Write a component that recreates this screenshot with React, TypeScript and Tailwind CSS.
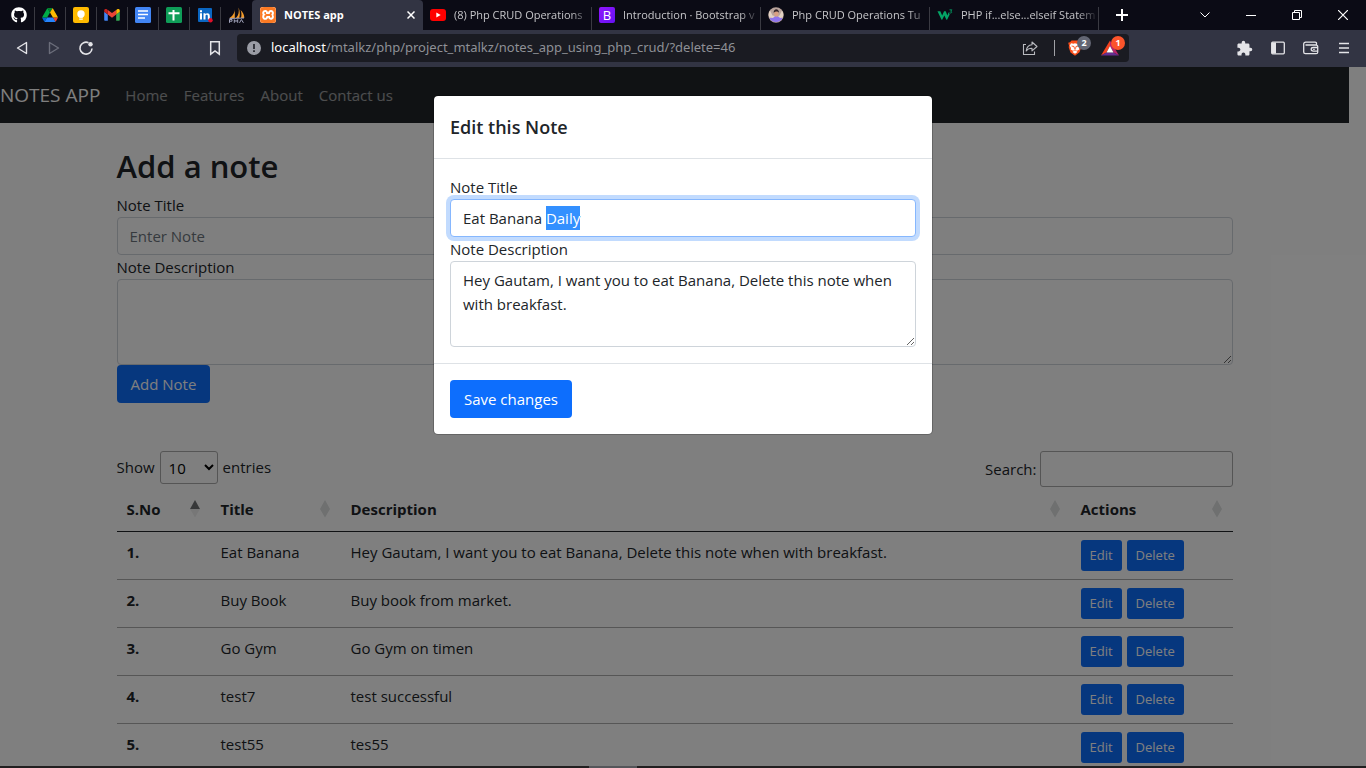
import { useEffect, useRef, type ReactNode } from 'react';
import { FaGithub } from 'react-icons/fa';
import { MdExtension } from 'react-icons/md';
import { SiXampp } from 'react-icons/si';

const DriveIcon = () => (
  <svg viewBox="0 0 87 78" className="h-3.5 w-4" aria-hidden="true">
    <path d="M6.6 66.9l3.8 6.6c.8 1.4 2 2.5 3.3 3.3l13.7-23.8H0c0 1.5.4 3.1 1.2 4.5z" fill="#0066da" />
    <path d="M43.6 25L29.9 1.2c-1.3.8-2.5 1.9-3.3 3.3L1.2 48.5A9 9 0 0 0 0 53h27.5z" fill="#00ac47" />
    <path d="M73.5 76.8c1.4-.8 2.6-1.9 3.4-3.3l9.2-16c.8-1.4 1.2-3 1.2-4.5H59.8l5.8 11.5z" fill="#ea4335" />
    <path d="M43.6 25L57.4 1.2C56 .4 54.500 0 52.900 0H34.400c-1.600 0-3.200.4-4.500 1.200z" fill="#00832d" />
    <path d="M59.800 53H27.500L13.700 76.800c1.400.8 2.900 1.200 4.500 1.200h50.800c1.600 0 3.200-.5 4.500-1.200z" fill="#2684fc" />
    <path d="M73.400 26.500L60.700 4.500c-.8-1.400-2-2.500-3.300-3.300L43.600 25l16.200 28h27.400c0-1.500-.4-3.100-1.200-4.500z" fill="#ffba00" />
  </svg>
);

const KeepIcon = () => (
  <svg viewBox="0 0 16 16" className="size-4" aria-hidden="true">
    <rect width="16" height="16" rx="2" fill="#ffba00" />
    <circle cx="8" cy="7" r="3.700" fill="#fff" />
    <path d="M6.200 9h3.600v1.700H6.200zM6.200 11.600h3.600v1.200H6.200z" fill="#fff" />
  </svg>
);

const GmailIcon = () => (
  <svg viewBox="0 0 52 40" className="h-3 w-4" aria-hidden="true">
    <path d="M3.500 39H12V18.500L0 9.500v26C0 37.400 1.600 39 3.500 39z" fill="#4285f4" />
    <path d="M40 39h8.500c1.900 0 3.500-1.600 3.500-3.500v-26l-12 9z" fill="#34a853" />
    <path d="M40 3v15.500l12-9V5c0-4.300-4.900-6.800-8.400-4.200z" fill="#fbbc04" />
    <path d="M12 18.500V3l14 10.500L40 3v15.500L26 29z" fill="#ea4335" />
    <path d="M0 5v4.500l12 9V3L8.400.8C4.900-1.800 0 .7 0 5z" fill="#c5221f" />
  </svg>
);

const DocsIcon = () => (
  <svg viewBox="0 0 16 16" className="size-4" aria-hidden="true">
    <rect width="16" height="16" rx="1.500" fill="#4285f4" />
    <path d="M3 4h10M3 7.500h10M3 11h7" stroke="#fff" strokeWidth="1.700" />
  </svg>
);

const SheetsIcon = () => (
  <svg viewBox="0 0 16 16" className="size-4" aria-hidden="true">
    <rect width="16" height="16" rx="1.500" fill="#0f9d58" />
    <path d="M2.500 6.300h11M7.500 3v10.500" stroke="#fff" strokeWidth="2" />
  </svg>
);

const LinkedInIcon = () => (
  <svg viewBox="0 0 16 16" className="size-4" aria-hidden="true">
    <rect x="1" y="1" width="14" height="14" rx="1" fill="#0a66c2" />
    <path d="M3 6.300h2v6.200H3zM3 3.300h2v1.900H3zM6.500 6.300h1.900v.9c.9-1.500 4.400-1.500 4.400 1.700v3.600h-2V9.300c0-2-2.300-1.800-2.300 0v3.200h-2z" fill="#fff" />
    <circle cx="13.500" cy="13.300" r="2.200" fill="#e0102a" />
  </svg>
);

const SailIcon = () => (
  <svg viewBox="0 0 16 16" className="size-4" aria-hidden="true">
    <path d="M5.800 1C6 5 4.500 8.500.500 11h5.300zM9.500.500c.7 4 .3 7.500-2.500 10.500h3.200c1-3 .9-7-.7-10.500zM11.500 3c1.200 2.500 1.200 5.500.5 8h3.300c0-3-1.300-6-3.800-8z" fill="#f29a2a" />
    <path d="M.500 15.800v-3.300h2.500v1.700H.5M5.300 15.800v-3.200l1.700 2 1.700-2v3.200M10.500 15.800l1.900-3.300 2 3.300M.500 11.500l14.500-.5" fill="none" stroke="#a3a5bd" strokeWidth="1" />
  </svg>
);

const XamppIcon = () => (
  <span className="flex size-4 items-center justify-center rounded-xs bg-[#fb7a24]">
    <SiXampp className="size-4 text-[#fb7a24] [background:white] rounded-sm" />
  </span>
);

const YouTubeIcon = () => (
  <svg viewBox="0 0 16 12" className="h-3 w-4" aria-hidden="true">
    <rect width="16" height="12" rx="3" fill="#f00" />
    <path d="M6.300 3.500v5L10.700 6z" fill="#fff" />
  </svg>
);

const BootstrapIcon = () => (
  <span className="flex size-4 items-center justify-center rounded-xs bg-linear-to-br from-[#9013fe] to-[#6610f2] text-[13px] leading-4 text-white">
    B
  </span>
);

const AvatarIcon = () => (
  <svg viewBox="0 0 16 16" className="size-4" aria-hidden="true">
    <circle cx="8" cy="8" r="7.700" fill="#b9a39b" />
    <path d="M1.500 11.500C4 10 6 9.500 8 9.500s4.500.5 6.500 2a7.700 7.700 0 0 1-13 0z" fill="#8f74ee" />
    <path d="M2 3.500l2.500 5L7 9l-2 2-3.800-.500A8 8 0 0 1 2 3.500zM14 3.500l-2.500 5L10 9l2 2 2.800-.500a8 8 0 0 0-.8-7z" fill="#e3d2c4" />
    <ellipse cx="8.300" cy="6.500" rx="2.200" ry="3" fill="#d9a184" />
    <path d="M5.700 6c-.5-5 5.700-5 5.200 0-.5-2-4-2-5.200 0z" fill="#33252b" />
  </svg>
);

const W3Icon = () => (
  <svg viewBox="0 0 17 16" className="h-4 w-[17px]" aria-hidden="true">
    <path d="M.5 4h3l2 4.500L7.500 4h1.800l1.700 4.500L12.300 5l1.200 2.500L10.700 13H10L7.800 8.500 5.500 13h-.7z" fill="#04a566" />
    <path d="M13.300 2.500h2.500l-1.300 1.500c1.800.2 1.500 2.500-1.300 1.700" fill="none" stroke="#04a566" strokeWidth=".9" />
  </svg>
);

const pinned: { name: string; icon: ReactNode }[] = [
  { name: 'GitHub', icon: <FaGithub className="size-4 text-white" /> },
  { name: 'Google Drive', icon: <DriveIcon /> },
  { name: 'Google Keep', icon: <KeepIcon /> },
  { name: 'Gmail', icon: <GmailIcon /> },
  { name: 'Google Docs', icon: <DocsIcon /> },
  { name: 'Google Sheets', icon: <SheetsIcon /> },
  { name: 'LinkedIn', icon: <LinkedInIcon /> },
  { name: 'phpMyAdmin', icon: <SailIcon /> },
];

const tabs: { title: string; icon: ReactNode }[] = [
  { title: '(8) Php CRUD Operations', icon: <YouTubeIcon /> },
  { title: 'Introduction · Bootstrap v', icon: <BootstrapIcon /> },
  { title: 'Php CRUD Operations Tu', icon: <AvatarIcon /> },
  { title: 'PHP if...else...elseif Statem', icon: <W3Icon /> },
];

const notes = [
  { title: 'Eat Banana', text: 'Hey Gautam, I want you to eat Banana, Delete this note when with breakfast.' },
  { title: 'Buy Book', text: 'Buy book from market.' },
  { title: 'Go Gym', text: 'Go Gym on timen' },
  { title: 'test7', text: 'test successful' },
  { title: 'test55', text: 'tes55' },
];

const columns = [
  { label: 'S.No', width: 'w-[94px]', sorted: true },
  { label: 'Title', width: 'w-[130px]', sorted: false },
  { label: 'Description', width: '', sorted: false },
  { label: 'Actions', width: 'w-[162px]', sorted: false },
];

function TabStrip() {
  return (
    <div className="flex h-[30px] items-stretch bg-[#0b0b15] pl-1">
      {pinned.map((p, i) => (
        <button key={p.name} aria-label={p.name} className="flex w-[31px] shrink-0 items-center justify-center">
          <span className="flex flex-1 justify-center">{p.icon}</span>
          {i < pinned.length - 1 && <span className="mt-[7px] h-[23px] w-px bg-[#3a3a42]" />}
        </button>
      ))}
      <div className="flex w-[171px] shrink-0 items-center rounded-t bg-[#323443] pr-1 pl-2 text-white">
        <XamppIcon />
        <span className="ml-2 flex-1 text-[11px] font-bold">NOTES app</span>
        <button aria-label="Close tab" className="flex size-4 items-center justify-center">
          <svg viewBox="0 0 8 8" className="size-2" aria-hidden="true">
            <path d="M.5.5l7 7M7.500.5l-7 7" stroke="#fff" strokeWidth="1.500" />
          </svg>
        </button>
      </div>
      {tabs.map((t) => (
        <button key={t.title} className="flex w-[169px] min-w-0 items-center pl-[7px] text-left text-[11px] text-[#c6c6c9]">
          <span className="flex w-4 shrink-0 justify-center">{t.icon}</span>
          <span className="ml-2 min-w-0 flex-1 overflow-hidden whitespace-nowrap [mask-image:linear-gradient(to_right,black_85%,transparent)]">
            {t.title}
          </span>
          <span className="mt-[7px] h-[23px] w-px bg-[#3a3a42]" />
        </button>
      ))}
      <button aria-label="New tab" className="flex w-[45px] shrink-0 items-center justify-center">
        <svg viewBox="0 0 12 12" className="size-3" aria-hidden="true">
          <path d="M6 0v12M0 6h12" stroke="#fff" strokeWidth="2" />
        </svg>
      </button>
      <div className="ml-auto flex">
        <button aria-label="Search tabs" className="flex w-[46px] items-center justify-center">
          <svg viewBox="0 0 10 6" className="h-1.5 w-2.5" aria-hidden="true">
            <path d="M.5.5L5 5 9.500.5" fill="none" stroke="#fff" />
          </svg>
        </button>
        <button aria-label="Minimize" className="flex w-[46px] items-center justify-center">
          <span className="h-px w-2.5 bg-white" />
        </button>
        <button aria-label="Restore" className="flex w-[46px] items-center justify-center">
          <svg viewBox="0 0 10 10" className="size-2.5" aria-hidden="true">
            <path d="M.5 2.500h7v7h-7zM2.500 2.500v-2h7v7h-2" fill="none" stroke="#fff" />
          </svg>
        </button>
        <button aria-label="Close" className="flex w-[46px] items-center justify-center">
          <svg viewBox="0 0 10 10" className="size-2.5" aria-hidden="true">
            <path d="M0 0l10 10M10 0L0 10" stroke="#fff" strokeWidth="1.200" />
          </svg>
        </button>
      </div>
    </div>
  );
}

function Toolbar() {
  return (
    <div className="flex h-[37px] items-center bg-[#323443] pb-px text-[#e4e4e8]">
      <div className="flex w-[237px] shrink-0 items-center px-3.5">
        <button aria-label="Back" className="flex size-4 items-center justify-center">
          <svg viewBox="0 0 16 16" className="size-4" aria-hidden="true">
            <path d="M12.500 2.500v11L3.500 8z" fill="none" stroke="currentColor" strokeWidth="1.400" strokeLinejoin="round" />
          </svg>
        </button>
        <button aria-label="Forward" className="ml-4 flex size-4 items-center justify-center text-[#6b6d7a]">
          <svg viewBox="0 0 16 16" className="size-4" aria-hidden="true">
            <path d="M3.500 2.500v11l9-5.500z" fill="none" stroke="currentColor" strokeWidth="1.400" strokeLinejoin="round" />
          </svg>
        </button>
        <button aria-label="Reload" className="ml-4 flex size-4 items-center justify-center">
          <svg viewBox="0 0 16 16" className="size-4" aria-hidden="true">
            <path d="M10.500 2.700A6 6 0 1 0 14 8.500" fill="none" stroke="currentColor" strokeWidth="1.600" />
            <circle cx="12.500" cy="4.300" r="2.200" fill="currentColor" />
          </svg>
        </button>
        <button aria-label="Bookmark" className="ml-auto flex size-4 items-center justify-center">
          <svg viewBox="0 0 16 16" className="size-4" aria-hidden="true">
            <path d="M3.700 1.800h8.600v12.400L8 10.900l-4.300 3.300z" fill="none" stroke="currentColor" strokeWidth="1.500" />
          </svg>
        </button>
      </div>
      <div className="flex h-7 min-w-0 flex-1 items-center rounded bg-[#1a1b22] pr-1 pl-2.5">
        <svg viewBox="0 0 14 14" className="size-3.5 shrink-0" aria-hidden="true">
          <circle cx="7" cy="7" r="7" fill="#9a9ca5" />
          <path d="M6.200 3h1.600v5H6.200zM6.200 9.300h1.600v1.600H6.200z" fill="#1a1b22" />
        </svg>
        <span className="ml-2.5 flex-1 truncate font-['Noto_Sans',sans-serif] text-[13px] text-[#8e9096]">
          <span className="text-white">localhost</span>/mtalkz/php/project_mtalkz/notes_app_using_php_crud/?delete=46
        </span>
        <button aria-label="Share" className="flex size-4 items-center justify-center text-[#b9babf]">
          <svg viewBox="0 0 16 16" className="size-4" aria-hidden="true">
            <path d="M4 4.500H1.500v10h11v-3" fill="none" stroke="currentColor" strokeWidth="1.100" />
            <path d="M10 2l5 4.500-5 4.300V8.300C7.500 8.300 5.500 9 4.200 11 4.500 7.500 6.500 5 10 4.700z" fill="none" stroke="currentColor" strokeWidth="1.100" strokeLinejoin="round" />
          </svg>
        </button>
        <span className="mx-4 h-4 w-px bg-[#a0a1a6]" />
        <button aria-label="Brave Shields" className="relative -ml-1 flex h-5 w-6 items-center">
          <svg viewBox="0 0 16 16" className="size-4" aria-hidden="true">
            <path d="M4.500.5h7L13 2.200l1.800.5-.8 3 .3 1.500-1.800 5L8 15.700l-4.500-3.200-1.800-5.300L2 5.700 1.200 2.700 3 2.200z" fill="#fb4f1b" />
            <path d="M4 3.300l2.500.4L8 3.300l1.500.4L12 3.300l1.300 2.400-1.300 2.300.3 1.500L9.500 11l1 1L8 13.700 5.500 12l1-1-2.800-1.500L4 8 2.700 5.700z" fill="#fff" />
            <path d="M4.600 6l2.400.5.5 2.300M11.400 6L9 6.500l-.5 2.300M6.500 10.700L8 9.800l1.500.9" fill="none" stroke="#fb4f1b" strokeWidth=".9" />
          </svg>
          <span className="absolute -top-0.5 right-0 flex size-3.5 items-center justify-center rounded-full bg-[#636673] text-[9px] font-bold text-white">2</span>
        </button>
        <button aria-label="Brave Rewards" className="relative ml-2.5 flex h-5 w-6 items-center">
          <svg viewBox="0 0 18 16" className="h-4 w-[18px]" aria-hidden="true">
            <path d="M9 .500L0 15.500l5.500-3L9 6z" fill="#f4421f" />
            <path d="M9 .500l9 15-5.500-3L9 6z" fill="#b8246b" />
            <path d="M0 15.500h18l-5.500-3h-7z" fill="#662d91" />
            <path d="M9 6l3.500 6.500h-7z" fill="#fff" />
          </svg>
          <span className="absolute -top-0.5 right-0 flex size-3.5 items-center justify-center rounded-full bg-[#fb542b] text-[9px] font-bold text-white">1</span>
        </button>
      </div>
      <div className="flex w-[237px] shrink-0 items-center justify-end gap-[17px] pr-3.5">
        <button aria-label="Extensions"><MdExtension className="size-[17px]" /></button>
        <button aria-label="Sidebar" className="flex size-4 items-center justify-center">
          <svg viewBox="0 0 16 16" className="size-4" aria-hidden="true">
            <rect x="1.700" y="2.200" width="12.600" height="11.600" rx="1" fill="none" stroke="currentColor" strokeWidth="1.300" />
            <path d="M2 2.500h4v11H2z" fill="currentColor" />
          </svg>
        </button>
        <button aria-label="Wallet" className="flex size-4 items-center justify-center">
          <svg viewBox="0 0 16 16" className="size-4" aria-hidden="true">
            <path d="M13.500 5V3.500c0-.8-.5-1.300-1.300-1.300H2.700c-1.300 0-2 .7-2 1.800v8c0 1 .7 1.700 1.700 1.700h10.800c.8 0 1.500-.7 1.500-1.500V6.500c0-.8-.7-1.500-1.500-1.500H2.500" fill="none" stroke="currentColor" strokeWidth="1.300" />
            <path d="M14.700 7.500h-4.500c-1.200 0-2 .8-2 1.800s.8 1.800 2 1.800h4.500" fill="none" stroke="currentColor" strokeWidth="1.300" />
            <path d="M10.200 8.800h1.500v1.100h-1.500z" fill="currentColor" />
          </svg>
        </button>
        <button aria-label="Menu" className="flex size-4 items-center justify-center">
          <svg viewBox="0 0 16 16" className="size-4" aria-hidden="true">
            <path d="M3 3.500h10M3 8h10M3 12.500h10" stroke="currentColor" strokeWidth="1.500" />
          </svg>
        </button>
      </div>
    </div>
  );
}

function SortIcon({ sorted }: { sorted: boolean }) {
  return (
    <svg viewBox="0 0 10 18" className="h-[18px] w-2.5" aria-hidden="true">
      <path d="M5 0l5 9H0z" fill={sorted ? '#6f7173' : '#dee0e0'} />
      <path d="M0 9h10l-5 8.500z" fill={sorted ? '#efefef' : '#dee0e0'} />
    </svg>
  );
}

const field = 'block w-full rounded border border-[#ced4da] bg-white px-3 py-1.5 leading-6 outline-none';

function NotesPage() {
  return (
    <div className="pr-[17px]">
      <nav className="flex h-14 items-center bg-[#212529]">
        <a href="#" className="mr-[17px] text-[19px] text-white">NOTES APP</a>
        {['Home', 'Features', 'About', 'Contact us'].map((l) => (
          <a key={l} href="#" className="p-2 text-white/55">{l}</a>
        ))}
      </nav>
      <div className="mx-auto max-w-[1140px] px-3">
        <form>
          <h2 className="mt-6 mb-2 text-[31px] leading-[38px] font-semibold">Add a note</h2>
          <label htmlFor="title" className="block leading-6">Note Title</label>
          <input id="title" type="text" placeholder="Enter Note" className={`${field} placeholder:text-[#6c757d]`} />
          <label htmlFor="desc" className="block leading-6">Note Description</label>
          <textarea id="desc" rows={3} className={`${field} h-[86px] resize-y`} />
          <button type="button" className="block h-[38px] rounded bg-[#0d6efd] px-3.5 text-white">Add Note</button>
        </form>
        <div className="mt-12 flex items-start justify-between">
          <label className="flex items-center">
            Show
            <select className="mx-[5px] h-[33px] w-[58px] rounded-[3px] border border-[#aaa] bg-white px-1 text-black">
              <option>10</option>
              <option>25</option>
            </select>
            entries
          </label>
          <label className="flex items-center">
            Search:
            <input type="search" className="ml-[3px] h-9 w-[193px] rounded-[3px] border border-[#aaa] bg-white px-1.5" />
          </label>
        </div>
        <table className="w-full table-fixed border-collapse text-left">
          <thead>
            <tr className="border-b border-[#212529]">
              {columns.map((c) => (
                <th key={c.label} className={`${c.width} h-11 pr-[11px] pl-2.5 font-bold`}>
                  <div className="flex items-center justify-between">
                    {c.label}
                    <SortIcon sorted={c.sorted} />
                  </div>
                </th>
              ))}
            </tr>
          </thead>
          <tbody>
            {notes.map((n, i) => (
              <tr key={n.title} className="border-b border-[#adadad] align-top leading-6">
                <th className="px-2.5 py-2 font-bold">{i + 1}.</th>
                <td className="px-2.5 py-2">{n.title}</td>
                <td className="px-2.5 py-2">{n.text}</td>
                <td className="px-2.5 py-2">
                  <div className="flex gap-[5px] text-[13px] text-white">
                    <button className="h-[31px] rounded-[3px] bg-[#0d6efd] px-[9px]">Edit</button>
                    <button className="h-[31px] rounded-[3px] bg-[#0d6efd] px-[9px]">Delete</button>
                  </div>
                </td>
              </tr>
            ))}
          </tbody>
        </table>
      </div>
    </div>
  );
}

function EditDialog() {
  const titleRef = useRef<HTMLInputElement>(null);

  useEffect(() => {
    const el = titleRef.current;
    if (el) {
      el.focus();
      el.setSelectionRange(11, 16);
    }
  }, []);

  return (
    <div className="absolute inset-0 bg-black/50">
      <div
        role="dialog"
        aria-labelledby="edit-heading"
        className="mx-auto mt-7 w-full max-w-[500px] rounded-[5px] border border-black/20 bg-white bg-clip-padding"
      >
        <h5 id="edit-heading" className="border-b border-[#dee2e6] p-4 text-lg leading-[30px] font-semibold">
          Edit this Note
        </h5>
        <form>
          <div className="p-4">
            <label htmlFor="edit-title" className="block leading-6">Note Title</label>
            <input
              id="edit-title"
              ref={titleRef}
              type="text"
              defaultValue="Eat Banana Daily"
              className="block w-full rounded border border-[#86b7fe] bg-white px-3 py-1.5 leading-6 ring-4 ring-[#c2dbfe] outline-none selection:bg-[#3390ff] selection:text-white"
            />
            <label htmlFor="edit-desc" className="block leading-6">Note Description</label>
            <textarea
              id="edit-desc"
              rows={3}
              defaultValue="Hey Gautam, I want you to eat Banana, Delete this note when with breakfast."
              className={`${field} h-[86px] resize-y`}
            />
          </div>
          <div className="border-t border-[#dee2e6] p-4">
            <button type="button" className="block h-[38px] rounded bg-[#0d6efd] px-3.5 text-white">Save changes</button>
          </div>
        </form>
      </div>
    </div>
  );
}

export default function App() {
  return (
    <div className="flex h-screen flex-col overflow-hidden bg-white font-['Open_Sans','Noto_Sans',sans-serif] text-[15px] text-[#212529]">
      <header className="shrink-0">
        <TabStrip />
        <Toolbar />
      </header>
      <main className="relative min-h-0 flex-1 overflow-hidden">
        <NotesPage />
        <EditDialog />
      </main>
      <div className="flex h-0.5 shrink-0 justify-center bg-[#211f20]">
        <span className="mr-[140px] w-12 bg-[#55565a]" />
      </div>
    </div>
  );
}
